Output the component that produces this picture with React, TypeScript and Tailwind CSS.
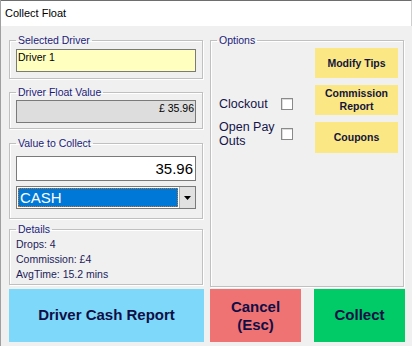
import React from 'react';

const font = { fontFamily: '"Liberation Sans", Arial, sans-serif' };

function Group({
  label,
  className,
  legendClass,
  children,
}: {
  label: string;
  className?: string;
  legendClass?: string;
  children: React.ReactNode;
}) {
  return (
    <fieldset className={`border border-[#c0c0c0] shadow-[inset_1px_1px_0_#ffffff,1px_1px_0_#ffffff] ${className ?? ''}`}>
      <legend className={`px-[2px] text-[10.5px] leading-[12px] text-[#1c1c7a] ${legendClass ?? ''}`}>{label}</legend>
      {children}
    </fieldset>
  );
}

function Check() {
  return <span className="block w-[12px] h-[12px] border border-[#8a8a8a] bg-white shadow-[inset_1px_1px_0_#dcdcdc]" />;
}

function OptionButton({ children }: { children: React.ReactNode }) {
  return (
    <button className="w-[83px] bg-[#fbe884] text-[10.5px] leading-[13px] font-bold text-[#14143c] text-center">
      {children}
    </button>
  );
}

export default function App() {
  return (
    <div style={font} className="w-[412px] h-[346px] bg-[#f0f0f0] border-l border-[#a0a0a0] flex flex-col overflow-hidden">
      {/* title bar */}
      <div className="h-[26px] bg-white border-t border-[#6e6e6e] border-r border-r-[#cfcfcf] flex items-center pl-[4px] text-[11px] text-black">
        Collect Float
      </div>

      <div className="flex pl-[8px] gap-[7px]">
        {/* left column */}
        <div className="w-[194px] flex flex-col">
          <Group label="Selected Driver" className="mt-[8px] px-[6px] pt-[3px] pb-[6px]">
            <div className="h-[23px] bg-[#ffffc0] border border-[#7a7a7a] pl-[1px] text-[10.5px] leading-[15px] text-black">
              Driver 1
            </div>
          </Group>

          <Group label="Driver Float Value" className="mt-[7px] px-[6px] pt-[2px] pb-[5px]">
            <div className="h-[23px] bg-[#dddddd] border border-[#7a7a7a] pr-[1px] text-right text-[10.5px] leading-[15px] text-black">
              £ 35.96
            </div>
          </Group>

          <Group label="Value to Collect" className="mt-[8px] px-[6px] pt-[7px] pb-[9px]">
            <div className="h-[25px] bg-white border border-[#7a7a7a] pr-[2px] text-right text-[15px] leading-[23px] text-black">
              35.96
            </div>
            <div className="mt-[5px] h-[23px] border border-[#7a7a7a] bg-white flex">
              <div className="flex-1 m-px bg-[#0078d7] border border-dotted border-[#d07020] text-white text-[15px] leading-[17px] pl-[1px]">
                CASH
              </div>
              <div className="w-[16px] bg-[#e1e1e1] border-l border-[#adadad] flex items-center justify-center">
                <svg width="7" height="4" viewBox="0 0 7 4">
                  <path d="M0 0h7L3.5 4z" fill="#000" />
                </svg>
              </div>
            </div>
          </Group>

          <Group label="Details" className="mt-[4px] px-[6px] pt-[2px] pb-[2px]">
            <div className="text-[10.5px] leading-[15px] text-[#1c1c5a]">
              <div>Drops: 4</div>
              <div>Commission: £4</div>
              <div>AvgTime: 15.2 mins</div>
            </div>
          </Group>
        </div>

        {/* right column */}
        <Group
          label="Options"
          legendClass="-ml-[2px]"
          className="mt-[8px] w-[194px] h-[253px] pl-[8px] pr-[5px] pt-[2px]"
        >
          <div className="flex justify-between">
            <div className="flex flex-col text-[12.5px] leading-[14px] text-[#14144a]">
              <div className="mt-[49px] flex items-center">
                <span className="w-[62px]">Clockout</span>
                <Check />
              </div>
              <div className="mt-[9px] flex items-center">
                <span className="w-[62px]">
                  Open Pay
                  <br />
                  Outs
                </span>
                <Check />
              </div>
            </div>
            <div className="flex flex-col gap-[7px]">
              <OptionButton>
                <span className="block h-[30px] leading-[30px]">Modify Tips</span>
              </OptionButton>
              <OptionButton>
                <span className="flex flex-col justify-center h-[30px]">
                  <span>Commission</span>
                  <span>Report</span>
                </span>
              </OptionButton>
              <OptionButton>
                <span className="block h-[31px] leading-[31px]">Coupons</span>
              </OptionButton>
            </div>
          </div>
        </Group>
      </div>

      {/* bottom buttons */}
      <div className="flex mt-[2px] pl-[8px] text-[15px] font-bold text-[#0f0f46]">
        <button className="w-[195px] h-[53px] bg-[#7dd8fa]">Driver Cash Report</button>
        <button className="ml-[6px] w-[91px] h-[53px] bg-[#f07373] leading-[18px]">
          Cancel
          <br />
          (Esc)
        </button>
        <button className="ml-[13px] w-[91px] h-[53px] bg-[#00cb66]">Collect</button>
      </div>
    </div>
  );
}
